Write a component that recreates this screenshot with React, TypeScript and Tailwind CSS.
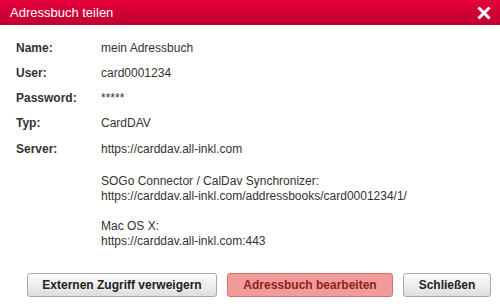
const rows = [
  { label: "Name:", value: "mein Adressbuch" },
  { label: "User:", value: "card0001234" },
  { label: "Password:", value: "*****" },
  { label: "Typ:", value: "CardDAV" },
];

const App = () => {
  return (
    <div className="w-[500px] h-[306px] bg-white font-['Liberation_Sans',Arial,sans-serif] text-[12px] text-[#333]">
      {/* Header */}
      <div className="h-[25px] flex items-center justify-between pl-[10px] pr-[8px] bg-gradient-to-b from-[#e6003c] to-[#bd002f]">
        <span className="text-white text-[13px]">Adressbuch teilen</span>
        <svg width="14" height="14" viewBox="0 0 14 14" className="mr-[1px]">
          <path d="M2.5 2.5 L11.5 11.5 M11.5 2.5 L2.5 11.5" stroke="white" strokeWidth="3" strokeLinecap="square" />
        </svg>
      </div>

      {/* Details */}
      <div className="pl-[16px] pt-[16px]">
        {rows.map((r) => (
          <div key={r.label} className="flex h-[25px] leading-[15px]">
            <div className="w-[85px] font-bold">{r.label}</div>
            <div>{r.value}</div>
          </div>
        ))}
        <div className="flex leading-[15px] mt-[1px]">
          <div className="w-[85px] font-bold">Server:</div>
          <div>
            <div>https://carddav.all-inkl.com</div>
            <div className="mt-[17px]">SOGo Connector / CalDav Synchronizer:</div>
            <div>https://carddav.all-inkl.com/addressbooks/card0001234/1/</div>
            <div className="mt-[15px]">Mac OS X:</div>
            <div>https://carddav.all-inkl.com:443</div>
          </div>
        </div>
      </div>

      {/* Buttons */}
      <div className="flex gap-[10px] pl-[27px] mt-[24px]">
        <button className="w-[190px] h-[24px] rounded-[3px] border border-[#a8a8a8] bg-gradient-to-b from-[#fdfdfd] to-[#dedede] font-bold text-[#222]">
          Externen Zugriff verweigern
        </button>
        <button className="w-[166px] h-[24px] rounded-[3px] border border-[#d87070] bg-[#f29b9b] font-bold text-[#8e1f1f]">
          Adressbuch bearbeiten
        </button>
        <button className="w-[88px] h-[24px] rounded-[3px] border border-[#a8a8a8] bg-gradient-to-b from-[#fdfdfd] to-[#dedede] font-bold text-[#222]">
          Schließen
        </button>
      </div>
    </div>
  );
};

export default App;
